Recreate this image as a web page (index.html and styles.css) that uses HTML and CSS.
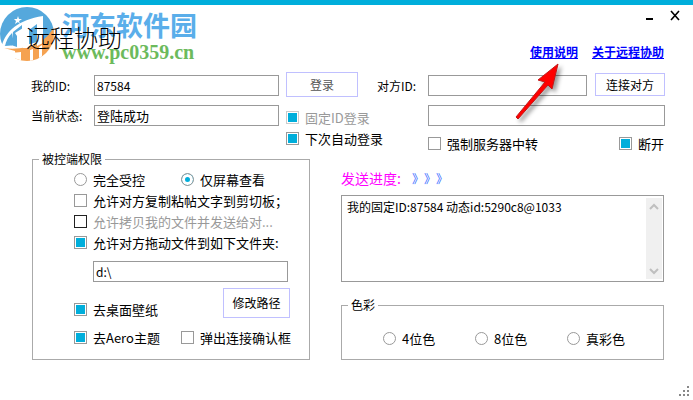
FILE: index.html
```html
<!DOCTYPE html>
<html lang="zh-CN">
<head>
  <meta charset="UTF-8" />
  <meta name="viewport" content="width=device-width, initial-scale=1.0"/>
  <title>远程协助</title>
  <link rel="stylesheet" href="styles.css">
</head>
<body>

  <!-- HEADER -->
  <header>
    <h1>远程协助</h1>
    <div class="header-right">
      <div class="window-buttons">
        <button type="button" aria-label="最小化">
          <svg width="12" height="12" viewBox="0 0 12 12"><path d="M2 10h7" stroke="#000" stroke-width="2"/></svg>
        </button>
        <button type="button" aria-label="关闭">
          <svg width="12" height="12" viewBox="0 0 12 12"><path d="M2 2l8 9M10 2l-8 9" stroke="#000" stroke-width="1.6"/></svg>
        </button>
      </div>
      <nav>
        <a href="#help">使用说明</a>
        <a href="#about">关于远程协助</a>
      </nav>
    </div>
  </header>

  <!-- WATERMARK -->
  <div class="watermark">
    <svg width="54" height="58" viewBox="0 0 54 58">
      <defs>
        <clipPath id="disc"><circle cx="27" cy="28" r="27"/></clipPath>
      </defs>
      <g clip-path="url(#disc)">
        <path d="M0 0h54v25L44 34 30 38 5 40 0 36z" fill="#55a8dc"/>
        <path d="M4 42l11 3V56H54V20C50 30 40 38 27 41 18 43 10 43 4 42z" fill="#f5a251"/>
        <path d="M2 39C6 25 18 14 43 10v27l-6 3V18l-8 6v18h-6V27l-5 4v11h-6V27C8 31 6 35 5 40z" fill="#fff"/>
        <path d="M13 26l9-7v9l-5 4v9l-6-2z" fill="#55a8dc"/>
        <path d="M15 27l8-5v19h-6V30z" fill="#fff"/>
        <path d="M3 43c5 3 12 4 18 3v12h-6V48C10 48 5 47 3 43zM30 44l3-1v15h-3zM39 41l3-2v19h-3z" fill="#fff"/>
      </g>
      <path d="M18 10l1 3h3l-3 2 1 3-2-2-3 2 1-3-2-2h3z" fill="#fff"/>
    </svg>
    <div class="watermark-text">
      <span class="site-name">河东软件园</span>
      <span class="site-url">www.pc0359.cn</span>
    </div>
  </div>

  <main>
    <!-- CONNECTION -->
    <div class="connection">
      <div class="account">
        <label for="my-id">我的ID:</label>
        <input type="text" id="my-id" value="87584">
        <label for="status">当前状态:</label>
        <input type="text" id="status" class="status" value="登陆成功" readonly>
      </div>
      <div class="login">
        <button type="button" class="btn muted">登录</button>
        <label class="option disabled"><input type="checkbox" checked disabled>固定ID登录</label>
        <label class="option"><input type="checkbox" checked>下次自动登录</label>
      </div>
      <div class="peer">
        <label for="peer-id">对方ID:</label>
        <input type="text" id="peer-id">
        <button type="button" class="btn">连接对方</button>
        <input type="text" class="peer-info" aria-label="对方状态">
        <div class="peer-options">
          <label class="option"><input type="checkbox">强制服务器中转</label>
          <label class="option"><input type="checkbox" checked>断开</label>
        </div>
      </div>
    </div>

    <div class="panels">
      <!-- PERMISSIONS -->
      <fieldset class="permissions">
        <legend>被控端权限</legend>
        <div class="pair">
          <label class="option"><input type="radio" name="mode">完全受控</label>
          <label class="option"><input type="radio" name="mode" checked>仅屏幕查看</label>
        </div>
        <label class="option"><input type="checkbox">允许对方复制粘帖文字到剪切板；</label>
        <label class="option disabled focus"><input type="checkbox">允许拷贝我的文件并发送给对...</label>
        <label class="option"><input type="checkbox" checked>允许对方拖动文件到如下文件夹:</label>
        <input type="text" class="path" value="d:\" aria-label="文件夹">
        <div class="path-row">
          <label class="option"><input type="checkbox" checked>去桌面壁纸</label>
          <button type="button" class="btn">修改路径</button>
        </div>
        <div class="pair">
          <label class="option"><input type="checkbox" checked>去Aero主题</label>
          <label class="option"><input type="checkbox">弹出连接确认框</label>
        </div>
      </fieldset>

      <div class="side">
        <!-- LOG -->
        <p class="progress">发送进度: <span>》》》</span></p>
        <div class="log">
          <textarea aria-label="日志" readonly>我的固定ID:87584 动态id:5290c8@1033</textarea>
          <div class="scrollbar">
            <svg width="16" height="16" viewBox="0 0 16 16"><path d="M4 11l4-4 4 4" fill="none" stroke="#bfbfbf" stroke-width="2"/></svg>
            <svg width="16" height="16" viewBox="0 0 16 16"><path d="M4 6l4 4 4-4" fill="none" stroke="#bfbfbf" stroke-width="2"/></svg>
          </div>
        </div>

        <!-- COLORS -->
        <fieldset class="colors">
          <legend>色彩</legend>
          <label class="option"><input type="radio" name="color">4位色</label>
          <label class="option"><input type="radio" name="color">8位色</label>
          <label class="option"><input type="radio" name="color">真彩色</label>
        </fieldset>
      </div>
    </div>
  </main>

  <!-- POINTER -->
  <svg class="pointer" width="54" height="70" viewBox="0 0 54 70">
    <path d="M46 9L26 25l7 2L4 62l2 2 30-34 4 4z" fill="#f00" stroke="#c01818" stroke-width="1"/>
  </svg>

  <svg class="grip" width="10" height="10" viewBox="0 0 10 10">
    <path d="M8 0h2v2H8zM4 4h2v2H4zM8 4h2v2H8zM0 8h2v2H0zM4 8h2v2H4zM8 8h2v2H8z" fill="#888"/>
  </svg>

</body>
</html>
```
FILE: styles.css
```css
* {
  box-sizing: border-box;
}

body {
  font-family: "Noto Sans CJK SC", sans-serif;
  font-size: 12px;
  line-height: 18px;
  color: #000;
  background-color: #fff;
  margin: 0;
  min-height: 100vh;
  border-top: 5px solid #00aedb;
  position: relative;
}

input, button, textarea {
  font: inherit;
  color: inherit;
  margin: 0;
}

/* ===== HEADER ===== */
header {
  display: flex;
  justify-content: space-between;
  height: 67px;
  padding: 4px 12px 0 26px;
}

h1 {
  font-size: 24px;
  font-weight: 300;
  line-height: 32px;
  margin: 12px 0 0;
}

.window-buttons {
  display: flex;
  justify-content: flex-end;
  gap: 13px;
}

.window-buttons button {
  display: flex;
  padding: 0;
  border: none;
  background: none;
}

nav {
  display: flex;
  gap: 14px;
  margin-top: 22px;
  padding-right: 17px;
}

nav a {
  color: #00f;
  font-weight: bold;
}

/* ===== WATERMARK ===== */
.watermark {
  position: absolute;
  z-index: -1;
  top: 1px;
  left: 0;
  display: flex;
  gap: 8px;
  pointer-events: none;
}

.watermark-text {
  display: flex;
  flex-direction: column;
  padding-top: 2px;
  font-weight: bold;
}

.site-name {
  font-size: 27px;
  line-height: 34px;
  color: #5aaeea;
}

.site-url {
  font-family: "Liberation Serif", serif;
  font-size: 20px;
  line-height: 20px;
  color: #6cba5c;
}

/* ===== CONTROLS ===== */
input[type="text"] {
  width: 100%;
  min-width: 0;
  height: 21px;
  padding: 0 2px;
  border: 1px solid #999;
  border-radius: 0;
  background-color: #fff;
}

input[type="checkbox"],
input[type="radio"] {
  appearance: none;
  flex: none;
  width: 13px;
  height: 13px;
  border: 1px solid #999;
  background-color: #fff;
}

input[type="radio"] {
  border-radius: 50%;
}

input[type="checkbox"]:checked {
  background-color: #00aedb;
  box-shadow: inset 0 0 0 1px #fff;
}

input[type="radio"]:checked {
  background-color: #00aedb;
  box-shadow: inset 0 0 0 3px #fff;
}

.option {
  display: flex;
  align-items: center;
  gap: 6px;
  font-size: 13px;
  line-height: 21px;
  white-space: nowrap;
}

.option.disabled {
  color: #999;
}

.option.disabled input {
  border-color: #ccc;
}

.option.focus input {
  border-color: #222;
}

.btn {
  padding: 0;
  border: 1px solid #c0c0ff;
  background-color: #fff;
}

.btn.muted {
  color: #555;
}

/* ===== CONNECTION ===== */
.connection {
  display: flex;
  padding: 0 28px 0 31px;
}

.account {
  display: grid;
  grid-template-columns: 63px 185px;
  gap: 9px 0;
  align-content: start;
  align-items: center;
  padding-top: 3px;
}

.status {
  font-size: 13px;
}

.login {
  display: flex;
  flex-direction: column;
  width: 72px;
  margin-left: 7px;
}

.login .btn {
  height: 25px;
  margin-bottom: 10px;
}

.peer {
  flex: 1;
  display: grid;
  grid-template-columns: 51px 1fr 78px;
  gap: 9px 0;
  align-content: start;
  align-items: center;
  margin-left: 19px;
  padding-top: 3px;
}

.peer .btn {
  height: 23px;
  margin: -2px 0 0 8px;
}

.peer-info,
.peer-options {
  grid-column: 2 / 4;
}

.peer-options {
  display: flex;
  justify-content: space-between;
  padding-right: 1px;
}

.peer-options .option,
.path-row .option {
  line-height: 17px;
}

/* ===== PANELS ===== */
fieldset {
  min-width: 0;
  margin: 0;
  padding: 0;
  border: 1px solid #aaa;
}

legend {
  padding: 0 3px;
  line-height: 14px;
}

.panels {
  display: flex;
  gap: 31px;
  padding: 0 29px 0 32px;
}

.permissions {
  width: 278px;
  padding: 3px 17px 11px 41px;
}

.permissions legend,
.colors legend {
  margin-left: -35px;
}

.pair {
  display: grid;
  grid-template-columns: 107px 1fr;
}

.permissions .path {
  width: 195px;
  margin: 8px 0 6px 19px;
}

.path-row {
  display: flex;
  justify-content: space-between;
  align-items: flex-end;
  margin-right: 2px;
  margin-bottom: 9px;
}

.path-row .btn {
  width: 67px;
  height: 30px;
}

.side {
  flex: 1;
}

.progress {
  margin: 16px 0 6px;
  font-size: 14px;
  line-height: 21px;
  color: #f0f;
}

.progress span {
  margin-left: 8px;
  font-size: 12px;
  font-kerning: none;
  text-spacing-trim: space-all;
  color: #36f;
}

.log {
  display: flex;
  height: 87px;
  padding: 2px 1px 2px 5px;
  border: 1px solid #999;
}

.log textarea {
  flex: 1;
  padding: 0;
  border: none;
  resize: none;
  overflow: hidden;
}

.scrollbar {
  display: flex;
  flex-direction: column;
  justify-content: space-between;
  background-color: #f0f0f0;
}

.colors {
  display: flex;
  justify-content: space-between;
  margin-top: 16px;
  padding: 16px 38px 10px 41px;
}

/* ===== OVERLAYS ===== */
.pointer {
  position: absolute;
  top: 50px;
  left: 512px;
  filter: drop-shadow(3px 3px 2px rgba(0, 0, 0, 0.4));
  pointer-events: none;
}

.grip {
  position: absolute;
  right: 4px;
  bottom: 4px;
}
```
